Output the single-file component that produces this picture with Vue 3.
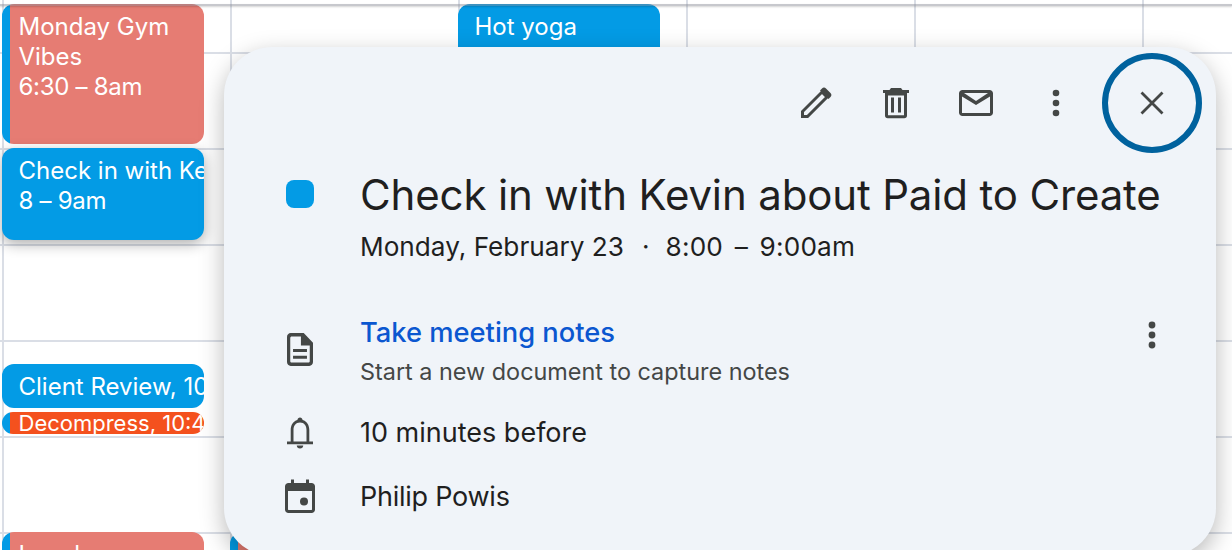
<script setup>
const iconColor = '#444746'
</script>

<template>
  <div class="page">
    <div class="event gym striped">
      <div class="event-title">Monday Gym<br />Vibes</div>
      <div class="event-time">6:30 – 8am</div>
    </div>
    <div class="event kevin">
      <div class="event-title">Check in with Kevin</div>
      <div class="event-time">8 – 9am</div>
    </div>
    <div class="event client"><div class="event-title">Client Review, 10am</div></div>
    <div class="event decompress striped"><div>Decompress, 10:45am</div></div>
    <div class="event lunch striped"><div class="event-title">Lunch</div></div>
    <div class="event other striped"></div>
    <div class="event yoga"><div class="event-title">Hot yoga</div></div>

    <div class="popover">
      <div class="toolbar">
        <button class="tool">
          <svg width="36" height="36" viewBox="0 0 36 36" :fill="iconColor">
            <path d="M4.500 31.500v-5L24 7l5 5L9.500 31.500z" fill="none" :stroke="iconColor" stroke-width="3" />
            <path d="M22 5.500l2-2c1.200-1.200 2.800-1.200 4 0l4.500 4.500c1.200 1.200 1.200 2.800 0 4l-2 2z" />
          </svg>
        </button>
        <button class="tool">
          <svg width="36" height="36" viewBox="0 0 36 36" :fill="iconColor">
            <path d="M13 3h10l1.500 2H31v3H5V5h6.500z" />
            <path d="M7 8h22v22.500c0 1.700-1.100 2.800-2.700 2.800H9.700c-1.600 0-2.700-1.100-2.700-2.800V8zm3 2.500v19.800h16V10.500H10z" />
            <path d="M13 12.500h3v15h-3zM20 12.500h3v15h-3z" />
          </svg>
        </button>
        <button class="tool">
          <svg width="36" height="36" viewBox="0 0 36 36" :fill="iconColor">
            <path d="M4.500 5h27C33.500 5 35 6.500 35 8.500v19c0 2-1.500 3.500-3.500 3.500h-27C2.500 31 1 29.500 1 27.500v-19C1 6.500 2.500 5 4.500 5zM4 11.500V28h28V11.500L18 20 4 11.500zM6 8l12 8 12-8H6z" />
          </svg>
        </button>
        <button class="tool">
          <svg width="36" height="36" viewBox="0 0 36 36" :fill="iconColor">
            <circle cx="18" cy="8" r="3.300" />
            <circle cx="18" cy="18" r="3.300" />
            <circle cx="18" cy="28" r="3.300" />
          </svg>
        </button>
        <button class="close">
          <svg width="36" height="36" viewBox="0 0 36 36" :stroke="iconColor" stroke-width="2.800" fill="none">
            <path d="M7.500 7.500l21 21M28.500 7.500l-21 21" />
          </svg>
        </button>
      </div>

      <div class="row heading">
        <div class="gutter"><span class="swatch"></span></div>
        <div>
          <h1>Check in with Kevin about Paid to Create</h1>
          <p class="when">
            <span class="date">Monday, February 23</span>
            <span class="dot">·</span>
            <span class="time">8:00 – 9:00am</span>
          </p>
        </div>
      </div>

      <div class="row notes">
        <div class="gutter">
          <svg class="doc" width="26" height="33" viewBox="1 1 28 34" preserveAspectRatio="none" :fill="iconColor">
            <path fill-rule="evenodd" d="M5 1h14l10 10v20c0 2.200-1.800 4-4 4H5c-2.200 0-4-1.800-4-4V5c0-2.200 1.800-4 4-4zm1 3.500c-.8 0-1.500.7-1.500 1.500v24c0 .8.700 1.500 1.500 1.500h18c.8 0 1.500-.7 1.500-1.500V14H16V4.500H6z" />
            <path d="M7.500 17.500h15v3h-15zM7.500 24.500h15v3h-15z" />
          </svg>
        </div>
        <div class="notes-text">
          <a class="notes-link">Take meeting notes</a>
          <span class="notes-sub">Start a new document to capture notes</span>
        </div>
        <svg class="notes-more" width="36" height="36" viewBox="0 0 36 36" :fill="iconColor">
          <circle cx="18" cy="8" r="3.400" />
          <circle cx="18" cy="18" r="3.400" />
          <circle cx="18" cy="28" r="3.400" />
        </svg>
      </div>

      <div class="row reminder">
        <div class="gutter">
          <svg class="bell" width="26" height="32" viewBox="1 0 28 32" preserveAspectRatio="none" :fill="iconColor">
            <path d="M15 .5c1.500 0 2.600 1 2.800 2.400C22.600 4.100 25 8.200 25 13v11.500h4v2.800H1v-2.800h4V13c0-4.800 2.400-8.900 7.200-10.100C12.400 1.500 13.500.5 15 .5zM15 5.500c-4.700 0-7 3.300-7 7.500v11.500h14V13c0-4.200-2.300-7.500-7-7.500z" />
            <path d="M11.500 28.500h7c0 2-1.500 3-3.500 3s-3.500-1-3.500-3z" />
          </svg>
        </div>
        <span>10 minutes before</span>
      </div>

      <div class="row calendar">
        <div class="gutter">
          <svg class="cal" width="30" height="34" viewBox="0 0 30 34" :fill="iconColor">
            <path d="M6 .5h3V4h12V.5h3V4h2.500C28.500 4 30 5.500 30 7.500v23c0 2-1.500 3.500-3.500 3.500h-23C1.500 34 0 32.500 0 30.500v-23C0 5.500 1.500 4 3.500 4H6V.5zM3 12v18.500c0 .3.200.5.500.5h23c.3 0 .5-.2.500-.5V12H3z" />
            <circle cx="19" cy="22.500" r="4" />
          </svg>
        </div>
        <span class="owner">Philip Powis</span>
      </div>
    </div>
  </div>
</template>

<style scoped>
.page {
  position: relative;
  width: 1232px;
  height: 550px;
  overflow: hidden;
  background-color: #fff;
  background-image:
    linear-gradient(#dadee6 2px, transparent 2px),
    linear-gradient(90deg, #dadee6 2px, transparent 2px);
  background-size: 100% 96px, 228px 100%;
  background-position: 0 52px, 2px 0;
  font-family: Inter, "Liberation Sans", sans-serif;
  color: #1f1f1f;
}
.page::before {
  content: "";
  position: absolute;
  z-index: 1;
  left: 0;
  right: 0;
  top: 4px;
  height: 2px;
  background: rgba(130, 133, 145, 0.45);
  box-shadow: 0 1px 2px rgba(0, 0, 0, 0.18);
}
.event {
  position: absolute;
  left: 2px;
  width: 202px;
  box-sizing: border-box;
  padding-left: 16.5px;
  border-radius: 12px;
  color: #fff;
  font-size: 24px;
  line-height: 30px;
  white-space: nowrap;
  overflow: hidden;
  background: #039be5;
}
.event-time {
  letter-spacing: -0.3px;
}
.striped {
  background: linear-gradient(90deg, #039be5 8px, var(--fill) 8px);
}
.gym {
  --fill: #e67c73;
  top: 4px;
  height: 140px;
  padding-top: 8px;
}
.kevin {
  top: 148px;
  height: 92px;
  padding-top: 8px;
  box-shadow: 0 4px 14px rgba(0, 0, 0, 0.32);
}
.client {
  top: 364px;
  height: 44px;
  padding-top: 8px;
}
.decompress {
  --fill: #f4511e;
  top: 412px;
  height: 22px;
  font-size: 22px;
  line-height: 22px;
}
.lunch {
  --fill: #e67c73;
  top: 532px;
  height: 40px;
  padding-top: 8px;
}
.other {
  --fill: #e67c73;
  left: 230px;
  top: 532px;
  height: 40px;
}
.yoga {
  left: 458px;
  top: 4px;
  height: 80px;
  padding-top: 8px;
  padding-left: 16.5px;
}
.popover {
  position: absolute;
  z-index: 2;
  left: 224px;
  top: 47px;
  width: 992px;
  height: 509px;
  box-sizing: border-box;
  padding: 6px 14px 0 60px;
  border-radius: 48px;
  background: #f0f4f9;
  box-shadow: 0 8px 24px rgba(0, 0, 0, 0.28);
  font-size: 27px;
}
.toolbar {
  display: flex;
  justify-content: flex-end;
  align-items: center;
  gap: 44px;
  height: 100px;
}
.tool,
.close {
  display: flex;
  align-items: center;
  justify-content: center;
  padding: 0;
  border: none;
  background: none;
}
.tool {
  width: 36px;
  height: 36px;
}
.close {
  width: 100px;
  height: 100px;
  margin-left: -16px;
  box-sizing: border-box;
  border: 6px solid #00629e;
  border-radius: 50%;
}
.row {
  display: flex;
  align-items: center;
}
.gutter {
  width: 76px;
  flex: none;
  display: flex;
  justify-content: flex-start;
}
.heading {
  align-items: flex-start;
  margin-top: 14px;
}
.swatch {
  width: 28px;
  height: 28px;
  margin-left: 2px;
  margin-top: 13px;
  border-radius: 8px;
  background: #039be5;
}
h1 {
  margin: 0;
  font-size: 42px;
  font-weight: 400;
  letter-spacing: -0.15px;
  line-height: 56px;
  white-space: nowrap;
}
.when {
  display: flex;
  align-items: center;
  margin: 7px 0 0;
  font-size: 26.2px;
  line-height: 34px;
}
.dot {
  margin: 0 16px 0 18px;
}
.time {
  word-spacing: 4px;
  letter-spacing: 0.2px;
}
.notes {
  align-items: flex-start;
  margin-top: 52px;
}
.notes .gutter {
  padding-top: 17px;
}
.doc {
  margin-left: 3px;
}
.bell {
  margin-left: 3px;
}
.cal {
  margin-left: 1px;
}
.notes-text {
  display: flex;
  flex-direction: column;
  flex: 1;
}
.notes-link {
  color: #0b57d0;
  font-size: 27.3px;
  font-weight: 500;
  line-height: 34px;
}
.notes-sub {
  margin-top: 7px;
  color: #444746;
  font-size: 23.4px;
  line-height: 30px;
}
.notes-more {
  margin: 1px 32px 0 0;
}
.reminder {
  margin-top: 29px;
}
.calendar {
  margin-top: 30px;
}
.owner {
  letter-spacing: -0.25px;
}
</style>
